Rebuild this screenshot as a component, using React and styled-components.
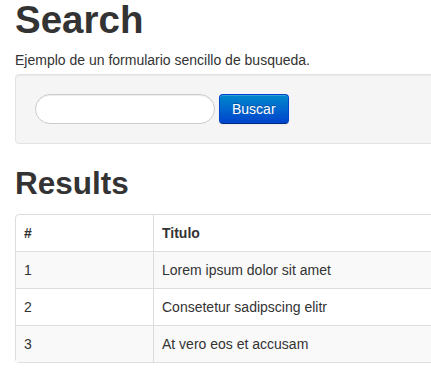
import React from "react";
import styled, { createGlobalStyle } from "styled-components";

const Global = createGlobalStyle`
  html, body { margin: 0; padding: 0; background: #fff; overflow: hidden; }
  body {
    font-family: "Liberation Sans", Arial, Helvetica, sans-serif;
    font-size: 14px;
    line-height: 20px;
    color: #333;
  }
`;

const Container = styled.div`
  width: 940px;
  padding-left: 15px;
`;

const Title = styled.h1`
  margin: 0 0 10px;
  font-size: 38.5px;
  line-height: 40px;
  font-weight: bold;
  color: #333;
`;

const Lead = styled.p`
  margin: 0 0 4px;
`;

const Well = styled.form`
  display: flex;
  align-items: center;
  gap: 4px;
  min-height: 30px;
  padding: 19px;
  margin: 0 0 19px;
  background: #f5f5f5;
  border: 1px solid #e3e3e3;
  border-radius: 4px;
  box-shadow: inset 0 1px 1px rgba(0, 0, 0, 0.05);
`;

const SearchInput = styled.input`
  box-sizing: border-box;
  width: 180px;
  height: 30px;
  padding: 0 14px;
  border: 1px solid #ccc;
  border-radius: 15px;
  background: #fff;
  font: inherit;
  box-shadow: inset 0 1px 1px rgba(0, 0, 0, 0.075);
  outline: none;
`;

const Button = styled.button`
  box-sizing: border-box;
  height: 30px;
  padding: 4px 12px;
  font-family: inherit;
  font-size: 14px;
  line-height: 20px;
  color: #fff;
  text-shadow: 0 -1px 0 rgba(0, 0, 0, 0.25);
  background: linear-gradient(to bottom, #0088cc, #0044cc);
  border: 1px solid #0044cc;
  border-bottom-color: #002a80;
  border-radius: 4px;
  box-shadow: inset 0 1px 0 rgba(255, 255, 255, 0.2), 0 1px 2px rgba(0, 0, 0, 0.05);
  cursor: pointer;
`;

const Subtitle = styled.h2`
  margin: 0 0 11px;
  font-size: 31.5px;
  line-height: 40px;
  font-weight: bold;
  color: #333;
`;

const Table = styled.table`
  width: 100%;
  border-collapse: separate;
  border-spacing: 0;
  border: 1px solid #ddd;
  border-left: 1px solid #ddd;
  border-radius: 4px;
`;

const Row = styled.tr`
  background: ${(p) => (p.$striped ? "#f9f9f9" : "#fff")};
`;

const HeadCell = styled.th`
  padding: 8px;
  text-align: left;
  font-weight: bold;
  line-height: 20px;
  border-left: ${(p) => (p.$first ? "none" : "1px solid #ddd")};
  width: ${(p) => (p.$first ? "121px" : "auto")};
`;

const Cell = styled.td`
  padding: 8px;
  line-height: 20px;
  border-top: 1px solid #ddd;
  border-left: ${(p) => (p.$first ? "none" : "1px solid #ddd")};
`;

const rows = [
  ["1", "Lorem ipsum dolor sit amet"],
  ["2", "Consetetur sadipscing elitr"],
  ["3", "At vero eos et accusam"],
];

export default function App() {
  return (
    <>
      <Global />
      <Container>
        <Title>Search</Title>
        <Lead>Ejemplo de un formulario sencillo de busqueda.</Lead>
        <Well onSubmit={(e) => e.preventDefault()}>
          <SearchInput type="text" />
          <Button type="submit">Buscar</Button>
        </Well>
        <Subtitle>Results</Subtitle>
        <Table>
          <thead>
            <tr>
              <HeadCell $first>#</HeadCell>
              <HeadCell>Titulo</HeadCell>
            </tr>
          </thead>
          <tbody>
            {rows.map(([n, t], i) => (
              <Row key={n} $striped={i % 2 === 0}>
                <Cell $first>{n}</Cell>
                <Cell>{t}</Cell>
              </Row>
            ))}
          </tbody>
        </Table>
      </Container>
    </>
  );
}
